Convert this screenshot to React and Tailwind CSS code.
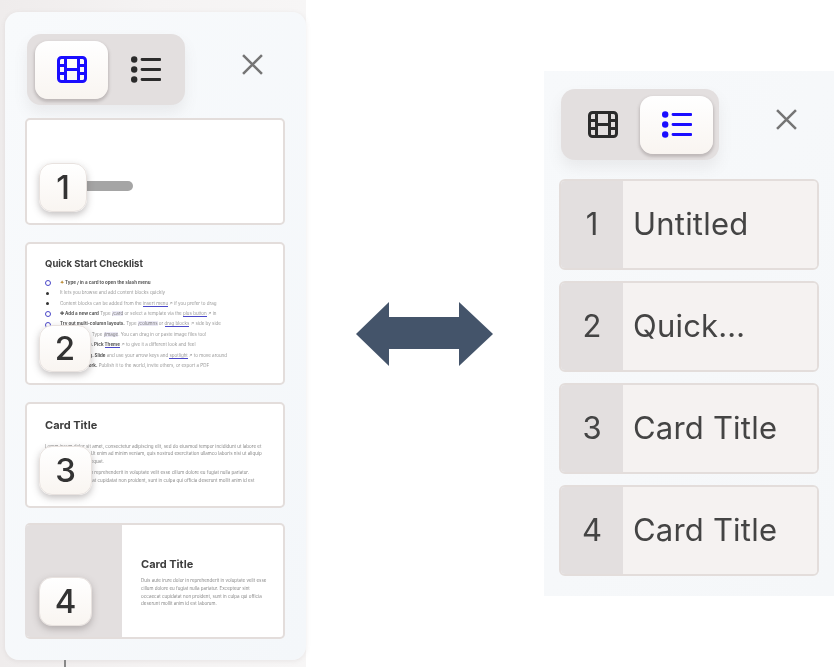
import React from 'react';

const FilmIcon = ({ className }) => (
	<svg viewBox="0 0 30 27" className={className} fill="none" stroke="currentColor" strokeWidth="3">
		<rect x="1.5" y="1.5" width="27" height="24" rx="3" />
		<path d="M8.5 1.5V25.5M21.5 1.5V25.5M1.5 9.5H8.5M1.5 17.5H8.5M21.5 9.5H28.5M21.5 17.5H28.5M8.5 13.5H21.5" />
	</svg>
);

const ListIcon = ({ className }) => (
	<svg viewBox="0 0 30 27" className={className} fill="none" stroke="currentColor" strokeWidth="2.8" strokeLinecap="round">
		<circle cx="3.2" cy="3.5" r="3.2" fill="currentColor" stroke="none" />
		<circle cx="3.2" cy="13.5" r="3.2" fill="currentColor" stroke="none" />
		<circle cx="3.2" cy="23.5" r="3.2" fill="currentColor" stroke="none" />
		<path d="M11 3.5H29M11 13.5H29M11 23.5H29" />
	</svg>
);

const CloseIcon = ({ className }) => (
	<svg viewBox="0 0 20 20" className={className} fill="none" stroke="#757575" strokeWidth="2.4">
		<path d="M1 1L19 19M19 1L1 19" />
	</svg>
);

const Toggle = ({ active }) => (
	<div className="w-[158px] h-[71px] rounded-[14px] bg-[#e3dfdf] flex items-center pl-2 shadow-[0_8px_14px_rgba(120,110,110,0.10)]">
		<div className={`w-[73px] h-[58px] shrink-0 rounded-[13px] flex items-center justify-center ${active === 'film' ? 'bg-gradient-to-b from-white to-[#f9f5f1] shadow-[0_2px_3px_1px_rgba(110,100,100,0.3)] text-[#1a0dff]' : 'pr-[6px] text-[#2b2b2b]'}`}>
			<FilmIcon className="w-[30px] h-[27px]" />
		</div>
		<div className={`w-[73px] h-[58px] shrink-0 -ml-[2px] rounded-[13px] flex items-center justify-center ${active === 'list' ? 'bg-gradient-to-b from-white to-[#f9f5f1] shadow-[0_2px_3px_1px_rgba(110,100,100,0.3)] text-[#1a0dff]' : 'pl-[6px] text-[#2b2b2b]'}`}>
			<ListIcon className="w-[30px] h-[27px]" />
		</div>
	</div>
);

const Badge = ({ n, className }) => (
	<div className={`absolute flex items-center justify-center rounded-[13px] border border-[#e8e2df] bg-gradient-to-b from-white to-[#f9f5f1] text-[33px] font-medium text-[#333] shadow-[0_3px_7px_rgba(90,80,80,0.35)] ${className}`}>
		{n}
	</div>
);

const Card = ({ className, children }) => (
	<div className={`relative w-[260px] rounded-[5px] border-2 border-[#e3dddb] bg-white ${className}`}>
		{children}
	</div>
);

const Link = ({ children }) => <span className="border-b border-[#4a47c9]">{children}</span>;

const Tag = ({ children }) => <span className="bg-[#eceaf6] text-[#777]">{children}</span>;

const CheckRow = ({ mark, children }) => (
	<div className="h-[10.4px] flex items-center whitespace-nowrap text-[4.5px] text-[#999]">
		<span className="w-[19px] pr-[6px] flex justify-center shrink-0">
			{mark === 'circle' && <span className="w-[6px] h-[6px] rounded-full border-[1.5px] border-[#4a47c9]" />}
			{mark === 'dot' && <span className="w-[3px] h-[3px] rounded-full bg-[#333]" />}
		</span>
		{children}
	</div>
);

const ChecklistCard = () => (
	<div className="pl-[18px] pt-[14px]">
		<div className="text-[9.5px] font-bold leading-[12px] text-[#3d3d3d]">Quick Start Checklist</div>
		<div className="mt-[8px] -ml-[4px]">
			<CheckRow mark="circle"><span className="font-bold text-[#555]"><span className="text-[#b8862b]">✦</span> Type / in a card to open the slash menu</span></CheckRow>
			<CheckRow mark="dot">It lets you browse and add content blocks quickly</CheckRow>
			<CheckRow mark="dot"><span>Content blocks can be added from the <Link>insert menu</Link> ↗ if you prefer to drag</span></CheckRow>
			<CheckRow mark="circle"><span><b className="text-[#555]">✚ Add a new card</b> Type <Tag>/card</Tag> or select a template via the <Link>plus button</Link> ↗ in</span></CheckRow>
			<CheckRow mark="circle"><span><b className="text-[#555]">Try out multi-column layouts.</b> Type <Tag>/columns</Tag> or <Link>drag blocks</Link> ↗ side by side</span></CheckRow>
			<CheckRow><span>Add an image. Type <Tag>/image</Tag>. You can drag in or paste image files too!</span></CheckRow>
			<CheckRow><span><b className="text-[#555]">Apply a theme. Pick <Link>Theme</Link></b> ↗ to give it a different look and feel</span></CheckRow>
			<CheckRow><span><b className="text-[#555]">Try presenting. Slide</b> and use your arrow keys and <Link>spotlight</Link> ↗ to move around</span></CheckRow>
			<CheckRow><span><b className="text-[#555]">Share your work.</b> Publish it to the world, invite others, or export a PDF</span></CheckRow>
		</div>
	</div>
);

const ListRow = ({ n, title }) => (
	<div className="w-[260px] h-[91px] flex rounded-[6px] border-2 border-[#e3dddb] overflow-hidden text-[31px] text-[#444]">
		<div className="w-[62px] bg-[#e3dfdf] flex items-center justify-center">{n}</div>
		<div className="flex-1 bg-[#f5f2f1] flex items-center pl-[10px] tracking-[0.2px]">{title}</div>
	</div>
);

export default function App() {
	return (
		<div className="relative w-[834px] h-[667px] flex bg-white overflow-hidden blur-[0.4px] font-['Inter',sans-serif]">
			{/* Left panel, card view */}
			<div className="w-[306px] h-full pl-[5px] pt-[12px] bg-gradient-to-r from-[#efecec] via-[#f5f3f3] to-[#f7f6f6]">
				<div className="w-[301px] h-[648px] rounded-[14px] bg-gradient-to-br from-[#f8fafc] to-[#f4f7fa] shadow-[0_1px_5px_rgba(120,110,110,0.12)] pl-[20px] pt-[22px]">
					<div className="flex items-center">
						<div className="pl-[2px]"><Toggle active="film" /></div>
						<CloseIcon className="w-[21px] h-[21px] ml-[57px] -mt-[10px]" />
					</div>
					<div className="mt-[13px] flex flex-col">
						<Card className="h-[107px]">
							<div className="absolute left-[60px] top-[61px] w-[46px] h-[10px] rounded-r-full bg-[#a5a5a5]" />
							<Badge n="1" className="left-[12px] top-[43px] w-[48px] h-[49px]" />
						</Card>
						<Card className="h-[143px] mt-[17px]">
							<ChecklistCard />
							<Badge n="2" className="left-[12px] top-[81px] w-[52px] h-[47px]" />
						</Card>
						<Card className="h-[106px] mt-[17px] pl-[18px] pt-[14px]">
							<div className="text-[11px] font-bold leading-[14px] text-[#3d3d3d]">Card Title</div>
							<div className="mt-[11px] text-[4.5px] leading-[7.4px] text-[#888] w-[222px]">
								Lorem ipsum dolor sit amet, consectetur adipiscing elit, sed do eiusmod tempor incididunt ut labore et dolore magna aliqua. Ut enim ad minim veniam, quis nostrud exercitation ullamco laboris nisi ut aliquip ex ea commodo consequat.
								<div className="mt-[4px] w-[210px]">Duis aute irure dolor in reprehenderit in voluptate velit esse cillum dolore eu fugiat nulla pariatur. Excepteur sint occaecat cupidatat non proident, sunt in culpa qui officia deserunt mollit anim id est</div>
							</div>
							<Badge n="3" className="left-[12px] top-[42px] w-[53px] h-[49px]" />
						</Card>
						<Card className="h-[116px] mt-[15px] flex overflow-hidden border-l-0">
							<div className="w-[97px] bg-[#e3dfdf]" />
							<div className="flex-1 pl-[19px] pt-[32px]">
								<div className="text-[11px] font-bold leading-[14px] text-[#3d3d3d]">Card Title</div>
								<div className="mt-[6px] text-[4.5px] leading-[7.8px] text-[#888] w-[126px]">
									Duis aute irure dolor in reprehenderit in voluptate velit esse cillum dolore eu fugiat nulla pariatur. Excepteur sint occaecat cupidatat non proident, sunt in culpa qui officia deserunt mollit anim id est laborum.
								</div>
							</div>
							<Badge n="4" className="left-[14px] top-[52px] w-[53px] h-[49px]" />
						</Card>
					</div>
				</div>
			</div>

			{/* Arrow between the two views */}
			<div className="flex-1 flex items-start justify-center pt-[302px]">
				<svg viewBox="0 0 137 64" className="w-[137px] h-[64px] -ml-[2px]">
					<path d="M0 32L33 0V15H103V0L137 32L103 64V47H33V64Z" fill="#44546a" />
				</svg>
			</div>

			{/* Right panel, list view */}
			<div className="mt-[71px] w-[290px] h-[525px] bg-gradient-to-br from-[#f7f9fb] to-[#f5f7f9] pl-[15px] pt-[18px]">
				<div className="flex items-center">
					<div className="pl-[2px]"><Toggle active="list" /></div>
					<CloseIcon className="w-[21px] h-[21px] ml-[57px] -mt-[10px]" />
				</div>
				<div className="mt-[19px] flex flex-col gap-[11px]">
					<ListRow n="1" title="Untitled" />
					<ListRow n="2" title="Quick…" />
					<ListRow n="3" title="Card Title" />
					<ListRow n="4" title="Card Title" />
				</div>
			</div>

			{/* stray line under the left panel */}
			<div className="absolute left-[64px] top-[660px] w-[2px] h-[7px] bg-[#888]" />
		</div>
	);
}
